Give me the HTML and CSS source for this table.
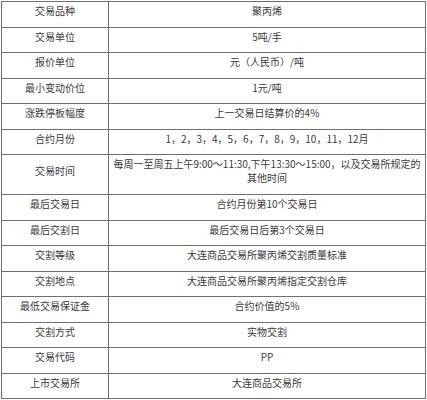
FILE: index.html
```html
<!DOCTYPE html>
<html lang="zh">
<head>
<meta charset="utf-8">
<link rel="stylesheet" href="styles.css">
</head>
<body>
<table class="spec">
  <colgroup><col class="c-name"><col class="c-val"></colgroup>
  <tbody>
    <tr><td>交易品种</td><td>聚丙烯</td></tr>
    <tr><td>交易单位</td><td>5吨/手</td></tr>
    <tr><td>报价单位</td><td>元（人民币）/吨</td></tr>
    <tr><td>最小变动价位</td><td>1元/吨</td></tr>
    <tr><td>涨跌停板幅度</td><td>上一交易日结算价的4%</td></tr>
    <tr><td>合约月份</td><td>1，2，3，4，5，6，7，8，9，10，11，12月</td></tr>
    <tr class="tall"><td>交易时间</td><td>每周一至周五上午9:00～11:30,下午13:30～15:00，以及交易所规定的<br>其他时间</td></tr>
    <tr><td>最后交易日</td><td>合约月份第10个交易日</td></tr>
    <tr><td>最后交割日</td><td>最后交易日后第3个交易日</td></tr>
    <tr><td>交割等级</td><td>大连商品交易所聚丙烯交割质量标准</td></tr>
    <tr><td>交割地点</td><td>大连商品交易所聚丙烯指定交割仓库</td></tr>
    <tr><td>最低交易保证金</td><td>合约价值的5%</td></tr>
    <tr><td>交割方式</td><td>实物交割</td></tr>
    <tr><td>交易代码</td><td>PP</td></tr>
    <tr><td>上市交易所</td><td>大连商品交易所</td></tr>
  </tbody>
</table>
</body>
</html>
```
FILE: styles.css
```css
html, body {
  margin: 0;
  padding: 0;
  background: #ffffff;
}
body {
  padding: 1px;
  font-family: "Noto Sans CJK SC", "Microsoft YaHei", sans-serif;
  font-size: 10px;
  color: #3a3a3a;
}
.spec {
  width: 425px;
  border-collapse: collapse;
  table-layout: fixed;
}
.c-name { width: 107px; }
.spec td {
  border: 1px solid #707070;
  text-align: center;
  vertical-align: middle;
  line-height: 13px;
  padding: 0 1px 7px;
  height: 17.5px;
  box-sizing: content-box;
}
.spec tr.tall td {
  height: 32px;
  line-height: 14px;
}
```
